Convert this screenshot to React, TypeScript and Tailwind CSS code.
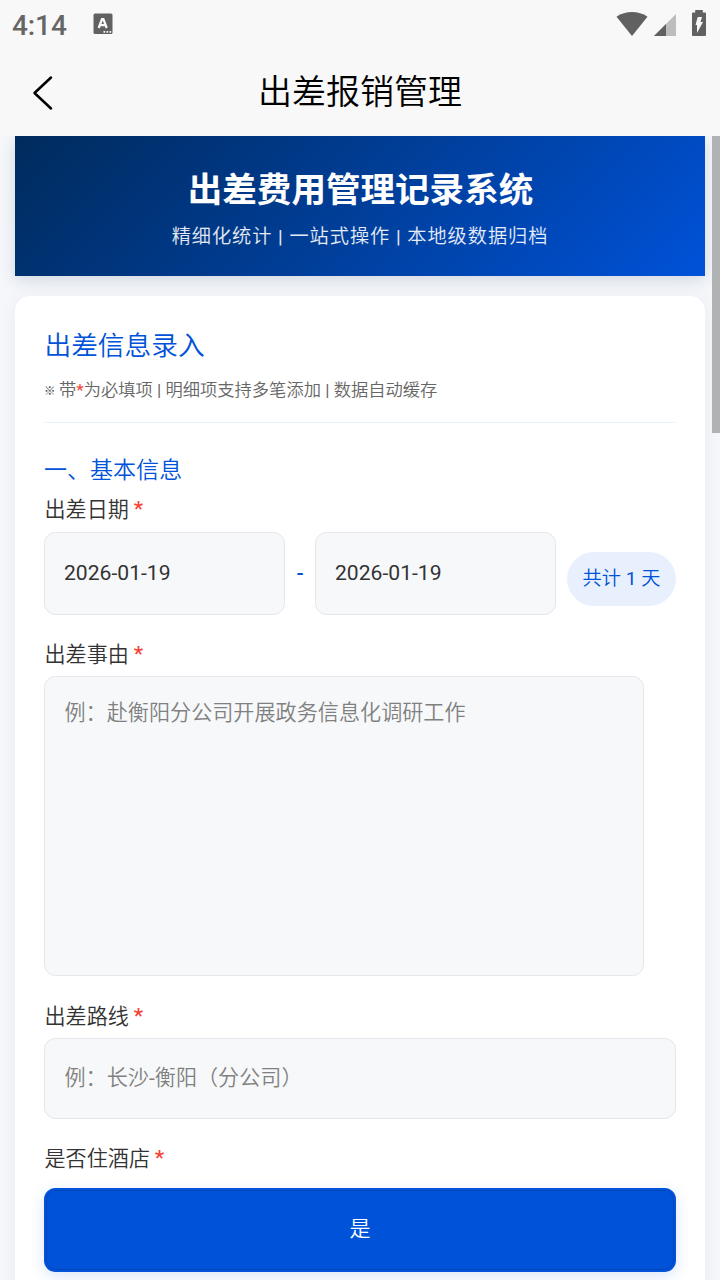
import type { ReactNode } from "react";

function StatusBar() {
  return (
    <div className="flex h-12 items-center justify-between pl-3 pr-3.5 text-[#666666]">
      <div className="flex items-center">
        <span className="w-[81px] pt-[3px] font-['Roboto'] text-[28px] leading-8 font-medium tracking-[-0.1px]">4:14</span>
        <svg width="20" height="22" viewBox="0 0 20 22">
          <rect x="0.5" y="0.5" width="19" height="20.5" rx="1.500" fill="#616161" />
          <path d="M5.700 15 L9 6.200 H10.400 L13.700 15 M7 12.200 H12.400" fill="none" stroke="#f8f8f8" strokeWidth="2.300" />
          <path d="M10.500 18h1.700v1.700h-1.700zM13.500 18h1.700v1.700h-1.700zM16.500 18h1.700v1.700h-1.700z" fill="#f8f8f8" />
        </svg>
      </div>
      <div className="flex items-start">
        <svg width="32" height="26" viewBox="0 0 32 26" className="mr-1.5">
          <path d="M0.500 5.700 C9.500 -0.500 22.500 -0.500 31.500 5.700 L16 25 Z" fill="#616161" />
        </svg>
        <svg width="22" height="22" viewBox="0 0 22 22" className="mr-4 mt-[3px]">
          <path d="M22 0V22H0Z" fill="#bdbdbd" />
          <path d="M12 10V22H0Z" fill="#616161" />
        </svg>
        <svg width="14" height="26" viewBox="0 0 14 26" className="-mt-px">
          <path d="M3.200 0h7.600v2.600H13a1 1 0 0 1 1 1V25a1 1 0 0 1-1 1H1a1 1 0 0 1-1-1V3.600a1 1 0 0 1 1-1h2.200z" fill="#616161" />
          <path d="M5.700 7H10L8.500 12H11L5 23V15H3.500Z" fill="#f8f8f8" />
        </svg>
      </div>
    </div>
  );
}

function Label({ children }: { children: ReactNode }) {
  return (
    <div className="flex h-[30px] pt-px pl-[0.500px] text-[21.120px] leading-[30px] text-[#333333]">
      {children}
      <span className="-mt-px ml-[4.800px] font-medium text-[#f44336]">*</span>
    </div>
  );
}

function DateField({ value }: { value: string }) {
  return (
    <div className="h-[83px] w-[241px] rounded-[11.500px] border border-[#e5e6eb] bg-[#f7f8fa] px-[19px] text-[21.120px] leading-[80px] text-[#333333]">
      {value}
    </div>
  );
}

export default function App() {
  return (
    <div className="flex h-[1280px] w-[720px] flex-col overflow-hidden bg-[#f5f7fa] font-['Roboto','Noto_Sans_CJK_SC_DemiLight','Noto_Sans_CJK_SC',sans-serif]">
      <header className="h-[136px] shrink-0 bg-[#f8f8f8]">
        <StatusBar />
        <div className="flex h-[88px] items-center pl-8">
          <svg width="22" height="36" viewBox="0 0 22 36" className="mt-0.5">
            <path d="M19 2.500 2.500 18 19 33.500" fill="none" stroke="#000" strokeWidth="2.500" strokeLinecap="round" strokeLinejoin="round" />
          </svg>
          <h1 className="mr-[54px] flex-1 text-center text-[34px] leading-[50px] font-normal text-black">出差报销管理</h1>
        </div>
      </header>

      <main className="relative h-[1144px] overflow-hidden px-[15px]">
        <section className="flex h-[140px] flex-col items-center bg-[linear-gradient(135deg,#002b5c_0%,#003a8c_40%,#0052d9_100%)] pt-[29px] text-white shadow-[0_4px_15px_rgba(0,43,92,0.15)]">
          <h2 className="pl-px font-['Roboto','Noto_Sans_CJK_SC',sans-serif] text-[34.560px] leading-[50px] font-bold">出差费用管理记录系统</h2>
          <p className="mt-2 text-[19.200px] leading-7 tracking-[0.960px] text-white/90">精细化统计 | 一站式操作 | 本地级数据归档</p>
        </section>

        <section className="mt-5 h-[1100px] rounded-[15px] bg-white px-[29px] pt-[29px] shadow-[0_2px_19px_rgba(0,0,0,0.05)]">
          <div className="h-[98px] border-b border-[#e8f3ff]">
            <h3 className="pt-px pl-[0.500px] text-[26.700px] leading-10 font-normal text-[#0052d9]">出差信息录入</h3>
            <p className="mt-[11px] flex h-[26px] text-[17.280px] leading-[26px] whitespace-pre text-[#666666]">
              <span className="w-[10.700px] pt-px font-['Roboto','Noto_Sans_CJK_SC'] text-[11.500px] font-bold text-[#444444]">※</span>
              <span> 带<span className="text-[#f44336]">*</span>为必填项 | 明细项支持多笔添加 | 数据自动缓存</span>
            </p>
          </div>

          <h4 className="mt-[29px] h-[42px] pt-px text-[23.040px] leading-9 font-normal text-[#0052d9]">一、基本信息</h4>
          <Label>出差日期</Label>
          <div className="mt-2 flex h-[83px] justify-between">
            <div className="flex">
              <DateField value="2026-01-19" />
              <span className="w-[30px] pt-px text-center text-[21.120px] leading-[80px] font-medium text-[#0052d9]">-</span>
              <DateField value="2026-01-19" />
            </div>
            <div className="mt-5 h-[54px] w-[109px] rounded-full bg-[#e8f0fe] pt-px text-center text-[19.200px] leading-[52px] whitespace-nowrap text-[#0052d9]">共计 1 天</div>
          </div>

          <div className="mt-6">
            <Label>出差事由</Label>
            <div className="mt-[7px] h-[300px] w-[600px] rounded-[11.500px] border border-[#e5e6eb] bg-[#f7f8fa] px-[19.500px] pt-[21px] text-[21.120px] leading-[30px] text-[#808080]">
              例：赴衡阳分公司开展政务信息化调研工作
            </div>
          </div>

          <div className="mt-[25px]">
            <Label>出差路线</Label>
            <div className="mt-[7px] h-[81px] rounded-[11.500px] border border-[#e5e6eb] bg-[#f7f8fa] px-[19.500px] text-[21.120px] leading-[77px] text-[#808080]">
              例：长沙-衡阳（分公司）
            </div>
          </div>

          <div className="mt-6">
            <Label>是否住酒店</Label>
            <button className="mt-[15px] block h-[84px] w-full rounded-[11.500px] border-2 border-[#0052d9] bg-[#0052d9] pb-0.5 text-[21.120px] leading-[76px] text-white shadow-[0_4px_15px_rgba(0,82,217,0.15),inset_0_0_0_1px_#0047ba]">
              是
            </button>
          </div>
        </section>
        <div className="absolute top-0 right-0 h-[297px] w-2 bg-[#b1b2b4]" />
      </main>
    </div>
  );
}
